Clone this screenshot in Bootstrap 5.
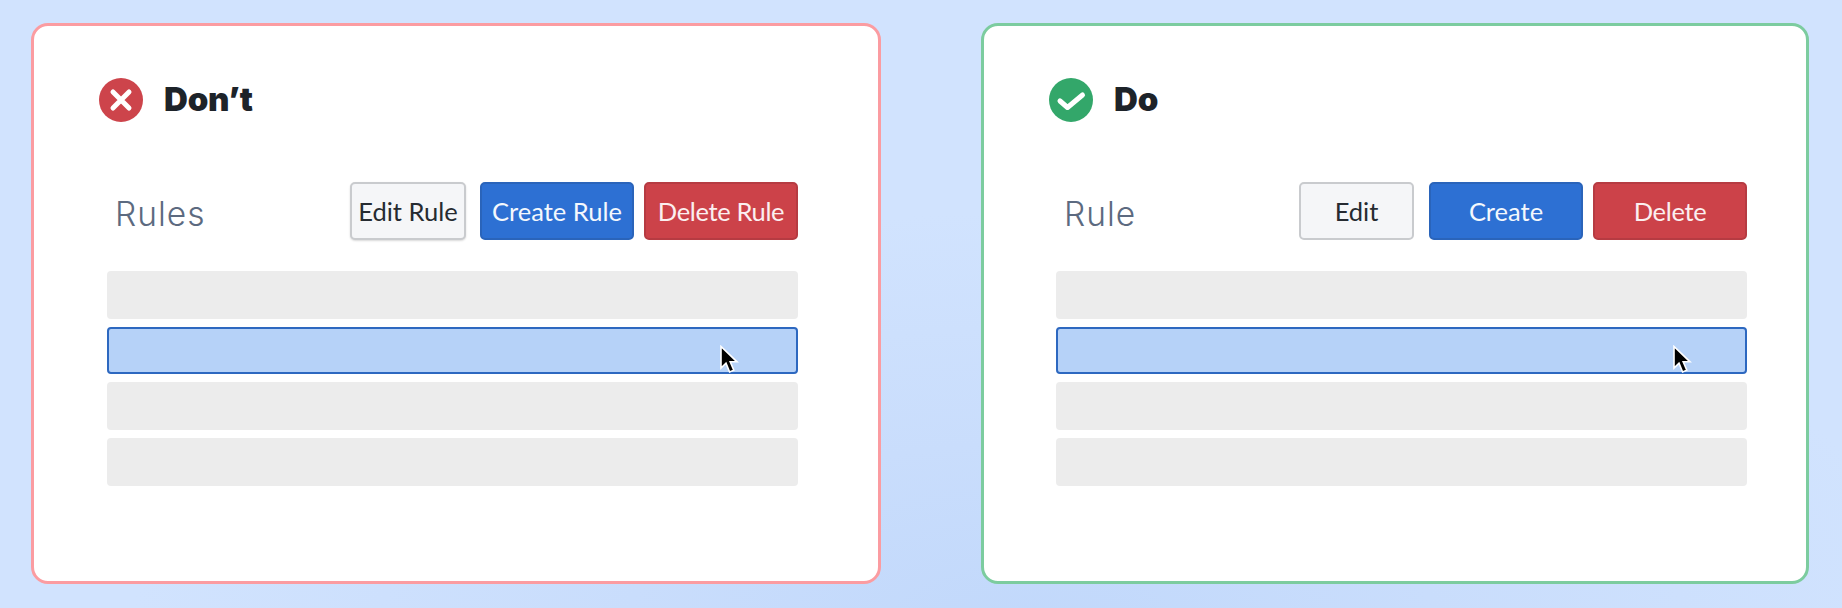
<!DOCTYPE html>
<html lang="en">
<head>
    <meta charset="UTF-8">
    <meta name="viewport" content="width=device-width, initial-scale=1.0">
    <title>Do and Don't: button labels</title>
    <link rel="stylesheet" href="https://cdn.jsdelivr.net/npm/bootstrap@5.3.0/dist/css/bootstrap.min.css">
    <script src="https://cdn.jsdelivr.net/npm/bootstrap@5.3.0/dist/js/bootstrap.bundle.min.js"></script>
    <style>
        html, body { height: 100%; }
        body {
            background: radial-gradient(ellipse 900px 420px at 56% 104%, #c1d8fb 0%, #c9ddfc 45%, rgba(209, 227, 254, 0) 100%), #d1e3fe;
            overflow: hidden;
        }
        .sheet { gap: 100px; padding: 23px 0 0 31px; }
        .panel {
            height: 561px;
            padding: 51px 0 0 65px;
            background: #fff;
            border: 3px solid;
            border-radius: 17px;
        }
        .panel-bad { width: 850px; border-color: #fb9ca1; }
        .panel-good { width: 828px; border-color: #7ccc9f; }
        .verdict { gap: 21px; height: 45px; }
        .verdict svg { width: 44px; height: 44px; flex: none; }
        .verdict-title {
            margin: 0;
            font: 900 33px/45px Inter, sans-serif;
            letter-spacing: -.2px;
            color: #1d2329;
        }
        .panel-inner { width: 691px; margin-left: 8px; }
        .panel-good .panel-inner { margin-left: 7px; }
        .toolbar { height: 58px; margin-top: 60px; margin-bottom: 31px; }
        .toolbar-title {
            margin: 6px 0 0 8px;
            font: 300 33.5px/58px Inter, sans-serif;
            letter-spacing: 1px;
            color: #5c6a80;
        }
        .act-group { gap: 10px; }
        .act {
            height: 58px;
            padding: 1px 0 0;
            font: 400 25.5px/1 Lato, sans-serif;
            border-width: 2px;
            border-radius: 5px;
        }
        .act-edit { width: 116px; margin-right: 4px; background: #f5f6f8; border-color: #c9cbce; color: #262b31; box-shadow: 0 1px 2px rgba(0, 0, 0, .15); }
        .panel-good .act-edit { width: 115px; margin-right: 5px; box-shadow: none; }
        .act-create { width: 154px; background: #2d70d3; border-color: #2a64ba; color: #f4f8fd; }
        .act-delete { width: 154px; background: #cc4249; border-color: #b63b42; color: #fbeff0; letter-spacing: -.35px; }
        .rule-row { height: 47.7px; background: #ececec; border-radius: 4px; }
        .rule-row-on { background: #b6d2f8; border: 2px solid #2d68c0; }
        .pointer { position: absolute; top: 16px; right: 57px; width: 20px; height: 30px; }
        .panel-good .pointer { right: 53px; }
    </style>
</head>
<body>

    <div class="sheet d-flex align-items-start">

        <!-- Don't -->
        <section class="panel panel-bad">
            <div class="verdict d-flex align-items-center">
                <svg viewBox="0 0 44 44" aria-hidden="true">
                    <circle cx="22" cy="22" r="22" fill="#cd444b"/>
                    <path d="M14 14 30 30M30 14 14 30" fill="none" stroke="#fff" stroke-width="5" stroke-linecap="round"/>
                </svg>
                <h2 class="verdict-title">Don’t</h2>
            </div>
            <div class="panel-inner">
                <div class="toolbar d-flex align-items-center">
                    <h3 class="toolbar-title me-auto">Rules</h3>
                    <div class="act-group d-flex">
                        <button type="button" class="btn act act-edit">Edit Rule</button>
                        <button type="button" class="btn act act-create">Create Rule</button>
                        <button type="button" class="btn act act-delete">Delete Rule</button>
                    </div>
                </div>
                <div class="d-flex flex-column gap-2">
                    <div class="rule-row"></div>
                    <div class="rule-row rule-row-on position-relative">
                        <svg class="pointer" viewBox="0 0 20 30" aria-hidden="true">
                            <path d="M2 1.5V23L7 18.2 10.6 27 14.8 25.2 11.2 16.8H18Z" fill="#000" stroke="#fff" stroke-width="1.6"/>
                        </svg>
                    </div>
                    <div class="rule-row"></div>
                    <div class="rule-row"></div>
                </div>
            </div>
        </section>

        <!-- Do -->
        <section class="panel panel-good">
            <div class="verdict d-flex align-items-center">
                <svg viewBox="0 0 44 44" aria-hidden="true">
                    <circle cx="22" cy="22" r="22" fill="#33a76a"/>
                    <path d="M11 23 18.5 29.5 33.5 17" fill="none" stroke="#fff" stroke-width="5" stroke-linecap="round" stroke-linejoin="round"/>
                </svg>
                <h2 class="verdict-title">Do</h2>
            </div>
            <div class="panel-inner">
                <div class="toolbar d-flex align-items-center">
                    <h3 class="toolbar-title me-auto">Rule</h3>
                    <div class="act-group d-flex">
                        <button type="button" class="btn act act-edit">Edit</button>
                        <button type="button" class="btn act act-create">Create</button>
                        <button type="button" class="btn act act-delete">Delete</button>
                    </div>
                </div>
                <div class="d-flex flex-column gap-2">
                    <div class="rule-row"></div>
                    <div class="rule-row rule-row-on position-relative">
                        <svg class="pointer" viewBox="0 0 20 30" aria-hidden="true">
                            <path d="M2 1.5V23L7 18.2 10.6 27 14.8 25.2 11.2 16.8H18Z" fill="#000" stroke="#fff" stroke-width="1.6"/>
                        </svg>
                    </div>
                    <div class="rule-row"></div>
                    <div class="rule-row"></div>
                </div>
            </div>
        </section>

    </div>

</body>
</html>
